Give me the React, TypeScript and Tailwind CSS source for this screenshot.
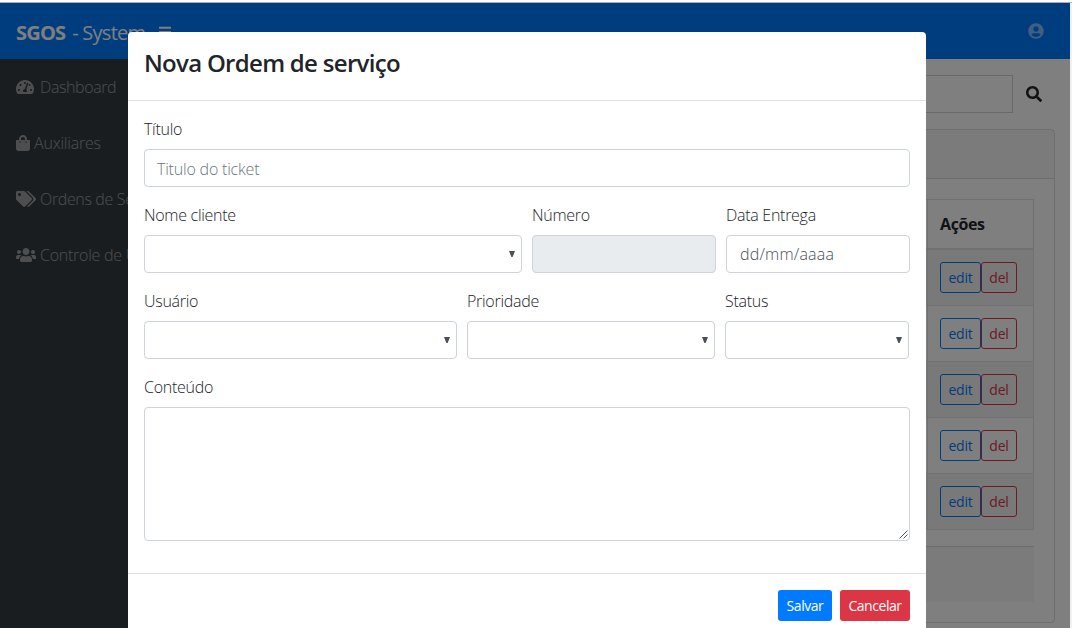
import React from "react";
import { FaBars, FaSearch, FaShoppingBag, FaTachometerAlt, FaTags, FaUserCircle, FaUsers } from "react-icons/fa";

const menu = [
  { icon: <FaTachometerAlt className="h-4 w-[18px]" />, label: "Dashboard", gap: "gap-[6px] tracking-[-0.4px]" },
  { icon: <FaShoppingBag className="h-4 w-[14px]" />, label: "Auxiliares", gap: "gap-1 tracking-[-0.2px]" },
  { icon: <FaTags className="h-4 w-5" />, label: "Ordens de Serviço", gap: "gap-1 tracking-[-0.35px]" },
  { icon: <FaUsers className="h-4 w-5" />, label: "Controle de Usuários", gap: "gap-1 tracking-[-0.25px]" },
];

function Field({ label, className = "", children }: { label: string; className?: string; children: React.ReactNode }) {
  return (
    <div className={`flex flex-col ${className}`}>
      <label className="mb-2 h-6 leading-6 tracking-[-0.28px] whitespace-nowrap">{label}</label>
      {children}
    </div>
  );
}

function SelectBox() {
  return (
    <div className="flex h-[38px] items-center justify-end rounded border border-[#ced4da] bg-white pr-[6px]">
      <svg width="6" height="6" viewBox="0 0 6 6" className="text-[#495057]">
        <path d="M0 0H6L3.6 6H2.4Z" fill="currentColor" />
      </svg>
    </div>
  );
}

function Page() {
  return (
    <div className="flex h-[625px] w-[1070px] flex-col bg-white">
      <header className="flex h-14 shrink-0 items-center bg-[#007bff] px-4">
        <div className="mt-[3px] flex items-center text-[20px] whitespace-nowrap text-white">
          <b className="font-bold tracking-[-0.8px]">SGOS</b>
          <span className="ml-[7px] tracking-[-0.75px]">- System</span>
        </div>
        <FaBars className="mt-[2px] ml-[14px] h-[14px] w-3 text-white" />
        <FaUserCircle className="mr-[10px] ml-auto size-4 text-white/50" />
      </header>
      <div className="flex grow">
        <nav className="w-[225px] shrink-0 bg-[#343a40]">
          {menu.map((m) => (
            <div key={m.label} className={`flex h-14 items-center px-4 font-light whitespace-nowrap text-white/50 ${m.gap}`}>
              <span>{m.icon}</span>
              <span>{m.label}</span>
            </div>
          ))}
        </nav>
        <main className="flex grow flex-col pt-4 pr-[15px] pl-4">
          <div className="mb-4 flex items-center">
            <div className="h-[38px] grow border border-[#ced4da]" />
            <div className="flex w-[42px] pl-[13px]">
              <FaSearch className="size-4 text-[#212529]" />
            </div>
          </div>
          <section className="flex h-[494px] flex-col rounded border border-black/[.125]">
            <div className="h-[49px] shrink-0 border-b border-black/[.125] bg-black/[.03]" />
            <div className="flex flex-col pt-5 pr-5 pl-5">
              <div className="flex flex-col border border-[#dee2e6]">
                <div className="flex h-[50px] justify-end border-b-2 border-[#dee2e6]">
                  <div className="flex w-[106px] items-center border-l border-[#dee2e6] pl-3 font-bold tracking-[-0.4px] text-[#212529]">Ações</div>
                </div>
                {[0, 1, 2, 3, 4].map((i) => (
                  <div key={i} className="flex h-14 justify-end border-b border-[#dee2e6] last:h-[55px] last:border-b-0 odd:bg-white even:bg-black/5">
                    <div className="flex w-[106px] items-center border-l border-[#dee2e6] pl-3 text-sm tracking-[-0.2px]">
                      <span className="flex h-[31px] w-[41px] items-center justify-center rounded-[3px] border border-[#007bff] text-[#007bff]">edit</span>
                      <span className="flex h-[31px] w-9 items-center justify-center rounded-[3px] border border-[#dc3545] text-[#dc3545]">del</span>
                    </div>
                  </div>
                ))}
              </div>
              <div className="mt-4 h-14 border-t border-black/[.125] bg-black/[.03]" />
            </div>
          </section>
        </main>
      </div>
    </div>
  );
}

export default function App() {
  return (
    <div className="relative flex h-[628px] w-[1072px] flex-col overflow-hidden bg-[#f1f1f1] font-['Open_Sans','Noto_Sans',sans-serif] text-base">
      <div className="h-[3px] shrink-0 border-b border-[#b5adad] bg-white" />
      <Page />
      <div className="absolute top-[3px] left-0 flex h-[625px] w-[1070px] bg-black/50 pt-[29px] pl-32">
        <div className="flex h-[640px] w-[798px] shrink-0 flex-col rounded-[4px] bg-white text-[#212529]">
          <div className="h-[69px] shrink-0 border-b border-[#dee2e6] px-4 pt-[13px]">
            <h4 className="text-[24px] leading-9 font-semibold tracking-[-0.7px] whitespace-nowrap">Nova Ordem de serviço</h4>
          </div>
          <form className="flex flex-col gap-4 px-4 pt-4 font-light">
            <Field label="Título">
              <div className="flex h-[38px] items-center rounded border border-[#ced4da] pt-[2px] pl-3 tracking-[-0.2px] text-[#6c757d]">Titulo do ticket</div>
            </Field>
            <div className="flex gap-[10px]">
              <Field label="Nome cliente" className="w-[378px]"><SelectBox /></Field>
              <Field label="Número" className="w-[184px]">
                <div className="h-[38px] rounded border border-[#ced4da] bg-[#e9ecef]" />
              </Field>
              <Field label="Data Entrega" className="w-[184px]">
                <div className="flex h-[38px] items-center rounded border border-[#ced4da] pl-[13px] tracking-[0.2px] text-[#495057]">dd/mm/aaaa</div>
              </Field>
            </div>
            <div className="flex gap-[10px]">
              <Field label="Usuário" className="w-[313px]"><SelectBox /></Field>
              <Field label="Prioridade" className="w-[248px]"><SelectBox /></Field>
              <Field label="Status" className="w-[184px]"><SelectBox /></Field>
            </div>
            <Field label="Conteúdo">
              <div className="flex h-[134px] items-end justify-end rounded border border-[#ced4da] p-px">
                <svg width="9" height="9" viewBox="0 0 9 9" stroke="#555" strokeWidth="1"><path d="M0.5 8.5L8.5 0.5M4.5 8.5L8.5 4.5" /></svg>
              </div>
            </Field>
          </form>
          <footer className="mt-8 flex h-20 justify-end gap-2 border-t border-[#dee2e6] px-4 pt-4 text-sm tracking-[-0.45px] text-white">
            <button type="button" className="h-[31px] w-[54px] rounded-[3px] bg-[#007bff]">Salvar</button>
            <button type="button" className="h-[31px] w-[70px] rounded-[3px] bg-[#dc3545]">Cancelar</button>
          </footer>
        </div>
      </div>
    </div>
  );
}
